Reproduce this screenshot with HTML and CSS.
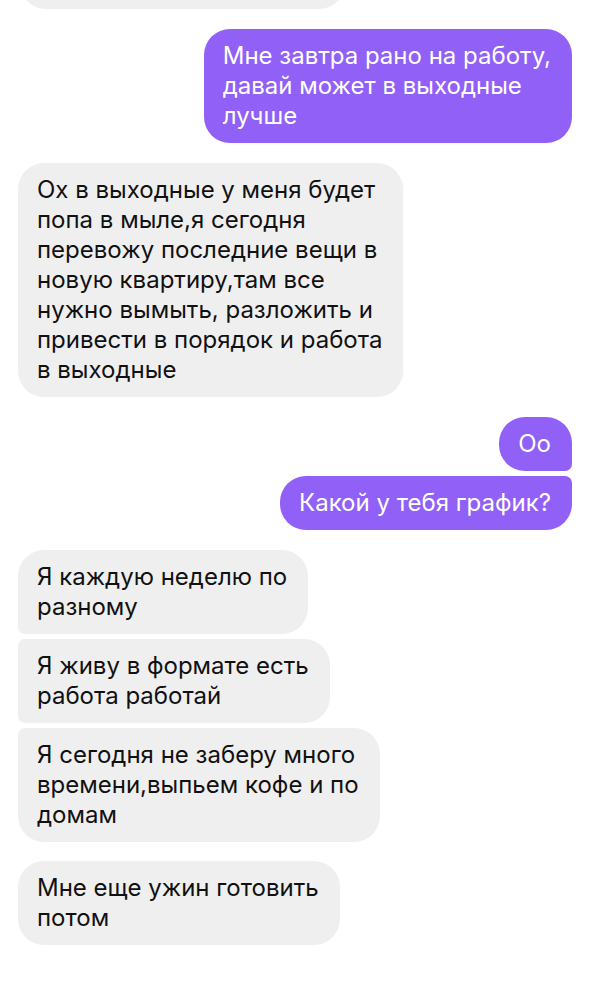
FILE: index.html
```html
<!DOCTYPE html>
<html>
<head>
    <meta charset="UTF-8">
    <meta name="viewport" content="width=device-width, initial-scale=1.0">
    <title>Чат</title>
    <link rel="stylesheet" href="styles.css">
</head>
<body>
    <div class="chat">
        <div class="msg in cut">&nbsp;<br>&nbsp;</div>

        <div class="msg out">Мне завтра рано на работу,<br>давай может в выходные<br>лучше</div>

        <div class="msg in">Ох в выходные у меня будет<br>попа в мыле,я сегодня<br>перевожу последние вещи в<br>новую квартиру,там все<br>нужно вымыть, разложить и<br>привести в порядок и работа<br>в выходные</div>

        <div class="group">
            <div class="msg out first">Оо</div>
            <div class="msg out last">Какой у тебя график?</div>
        </div>

        <div class="group">
            <div class="msg in first">Я каждую неделю по<br>разному</div>
            <div class="msg in mid">Я живу в формате есть<br>работа работай</div>
            <div class="msg in last">Я сегодня не заберу много<br>времени,выпьем кофе и по<br>домам</div>
        </div>

        <div class="msg in tail">Мне еще ужин готовить<br>потом</div>
    </div>
</body>
</html>
```

FILE: styles.css
```css
body {
    margin: 0;
    padding: 0;
    background-color: #fff;
    font-family: Inter, "Noto Sans", sans-serif;
    overflow: hidden;
}
.chat {
    display: flex;
    flex-direction: column;
    gap: 20px;
    padding: 0 18px;
    margin-top: -75px;
}
.group {
    display: flex;
    flex-direction: column;
    gap: 5px;
}
.msg {
    padding: 12px 21px 12px 19px;
    font-size: 24px;
    line-height: 30px;
    border-radius: 26px;
    white-space: nowrap;
}
.msg.in {
    align-self: flex-start;
    background-color: #efeff0;
    color: #111;
}
.msg.out {
    align-self: flex-end;
    background-color: #9160f7;
    color: #fff;
}
.msg.cut {
    width: 285px;
    margin-left: 2px;
}
.msg.tail {
    margin-top: -1px;
}
.msg.in.first {
    border-bottom-left-radius: 7px;
}
.msg.in.mid {
    border-top-left-radius: 7px;
    border-bottom-left-radius: 7px;
}
.msg.in.last {
    border-top-left-radius: 7px;
}
.msg.out.first {
    border-bottom-right-radius: 7px;
}
.msg.out.last {
    border-top-right-radius: 7px;
}
```
